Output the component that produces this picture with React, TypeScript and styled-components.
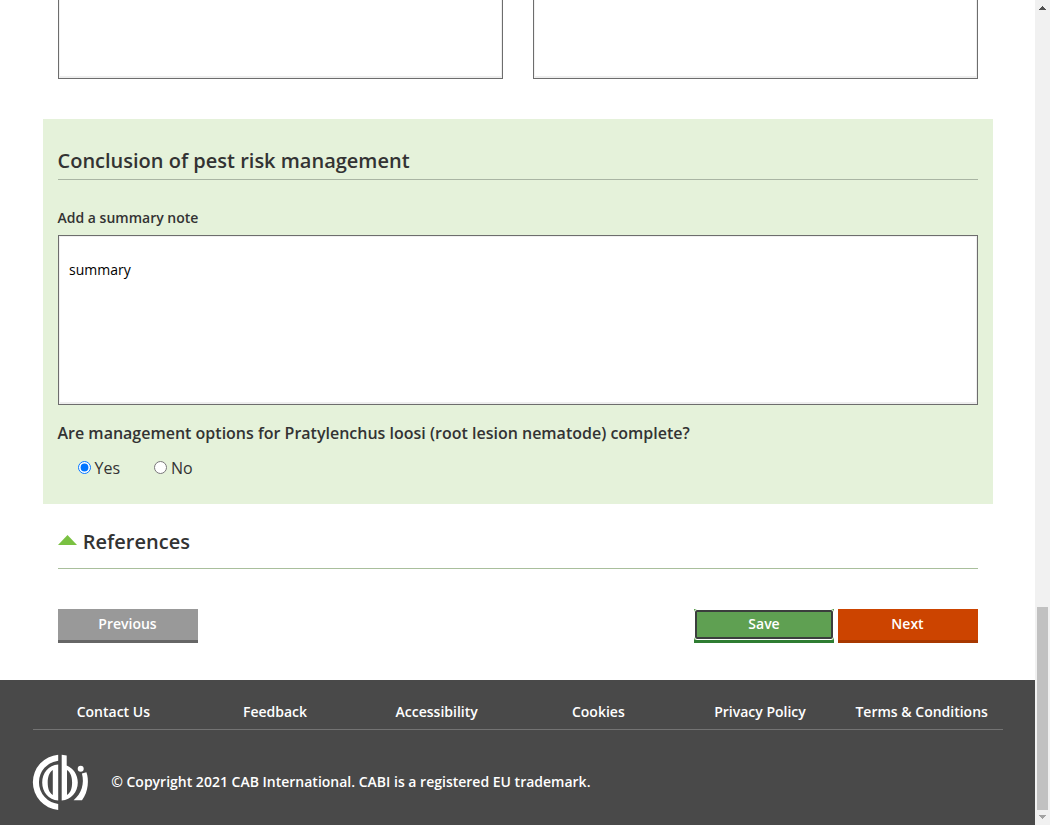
import React from "react";
import styled, { createGlobalStyle } from "styled-components";

const GlobalStyle = createGlobalStyle`
  * { box-sizing: border-box; }
  body { margin: 0; background: #fff; overflow: hidden; font-family: "Open Sans", sans-serif; color: #333; }
`;

const Viewport = styled.div`
  display: flex;
  width: 1050px;
  height: 825px;
`;

const Page = styled.div`
  width: 1035px;
  display: flex;
  flex-direction: column;
`;

const Main = styled.main`
  height: 680px;
  padding: 0 42.5px;
`;

const NotesRow = styled.div`
  display: flex;
  gap: 30px;
  height: 79px;
  margin-bottom: 40px;
  padding: 0 15px;
  align-items: flex-end;
`;

const NoteField = styled.textarea<{ $height: number }>`
  display: block;
  flex: 1;
  width: 100%;
  min-width: 0;
  height: ${(p) => p.$height}px;
  flex-shrink: 0;
  margin: 0;
  padding: 24px 10px 10px 10.5px;
  border: 1px solid #6d6d6d;
  border-radius: 0;
  background: #fff;
  box-shadow: inset 1px 1px 0 #f1f1f1, inset -1px -2px 0 #eee;
  color: #000;
  font: 14px/20px "Open Sans", sans-serif;
  resize: none;
  outline: none;
  overflow: hidden;
`;

const Conclusion = styled.section`
  height: 385px;
  padding: 26px 15px 0;
  background: #e5f2da;
`;

const Heading = styled.h2`
  margin: 0;
  height: 35px;
  border-bottom: 1px solid #a9b5a3;
  font-size: 20px;
  line-height: 32px;
  font-weight: 600;
`;

const FieldLabel = styled.label`
  display: block;
  margin: 28px 0 7px;
  font-size: 14px;
  line-height: 20px;
  font-weight: 600;
`;

const Question = styled.p`
  margin: 16px 0 0;
  font-size: 16px;
  line-height: 24px;
  font-weight: 600;
`;

const Options = styled.div`
  display: flex;
  gap: 34px;
  margin-top: 11px;
  padding-left: 20px;
`;

const Option = styled.label`
  display: flex;
  align-items: center;
  gap: 4px;
  font-size: 16px;
  line-height: 24px;
  input { width: 13px; height: 13px; margin: 0 0 1px; }
`;

const References = styled.section`
  display: flex;
  height: 65px;
  margin: 0 15px;
  padding-top: 22px;
  border-bottom: 1px solid #a9b5a3;
  border-bottom-color: #a9bf9c;
`;

const Arrow = styled.svg`
  width: 19px;
  height: 10px;
  margin: 9px 6.3px 0 0;
`;

const ReferencesTitle = styled.h2`
  margin: 0;
  font-size: 20px;
  line-height: 32px;
  font-weight: 600;
`;

const Actions = styled.div`
  display: flex;
  gap: 4px;
  margin: 40px 15px 0;
`;

const tones = {
  grey: ["#999", "#666"],
  green: ["#5fa052", "#2f7d32"],
  orange: ["#cc4400", "#a83800"],
};

const Button = styled.button<{ $tone: keyof typeof tones }>`
  width: 140px;
  height: 34px;
  padding: 0 0 1px;
  border: 0;
  border-bottom: 3px solid ${(p) => tones[p.$tone][1]};
  background: ${(p) => tones[p.$tone][0]};
  color: #fff;
  font: 600 14px/20px "Open Sans", sans-serif;
  &:first-child { margin-right: auto; }
`;

const SaveButton = styled(Button)`
  padding: 0;
`;

const FocusFrame = styled.span`
  display: flex;
  align-items: center;
  justify-content: center;
  height: 31px;
  padding: 0 0 1px 1px;
  border: 1px solid #fff;
  border-radius: 3px;
  background: #5fa052;
  box-shadow: inset 0 0 0 2px #3b3e3d;
`;

const Footer = styled.footer`
  height: 145px;
  padding: 0 32.5px;
  background: #494949;
  color: #fff;
  font-size: 14px;
  font-weight: 600;
`;

const FooterNav = styled.nav`
  display: grid;
  grid-template-columns: repeat(6, 1fr);
  height: 50px;
  padding-top: 22px;
  border-bottom: 1px solid #737373;
  margin: 0;
  text-align: center;
`;

const FooterLink = styled.a`
  color: #fff;
  line-height: 20px;
  white-space: nowrap;
`;

const Copyright = styled.div`
  display: flex;
  align-items: center;
  gap: 22.7px;
  margin-top: 24px;
  line-height: 20px;
`;

const Scrollbar = styled.div`
  width: 15px;
  height: 825px;
  display: flex;
  flex-direction: column;
  align-items: center;
  background: #f1f1f1;
`;

const ScrollArrow = styled.svg`
  width: 15px;
  height: 15px;
`;

const ScrollThumb = styled.div`
  width: 11px;
  height: 203px;
  margin-top: 592px;
  background: #c1c1c1;
`;

const links = ["Contact Us", "Feedback", "Accessibility", "Cookies", "Privacy Policy", "Terms & Conditions"];

function Logo() {
  return (
    <svg width="56" height="56" viewBox="1 -0.7 56 56" fill="#fff" fillRule="evenodd" overflow="visible">
      <path d="M26.2 0A27.7 27.7 0 0 0 26.2 55.2V49.3A21.8 21.8 0 0 1 26.2 6Z" />
      <path d="M26.2 9.8C16.5 10.5 10.2 18.4 10.2 27.8S16.5 45.1 26.2 45.8ZM20.8 15.2V40.4C17 37.8 15.7 33.3 15.7 27.8S17 17.8 20.8 15.2Z" />
      <path d="M29.7 0L34.7 0.7V10.7C41.3 13.3 45.8 20 45.8 27.8C45.8 37.5 39.2 45.1 29.7 45.8ZM35 15.2V40.4C38.8 37.8 40.1 33.3 40.1 27.8S38.8 17.8 35 15.2Z" />
      <circle cx="48.7" cy="14" r="3" />
      <path d="M49.9 18.9L54.4 17.5C57 24.5 56.7 36.6 50 45.6H41.6C49.5 39.2 52.7 28.7 49.9 18.9Z" />
    </svg>
  );
}

export default function App() {
  return (
    <Viewport>
      <GlobalStyle />
      <Page>
        <Main>
          <NotesRow>
            <NoteField $height={170} aria-label="Note one" />
            <NoteField $height={170} aria-label="Note two" />
          </NotesRow>
          <Conclusion>
            <Heading>Conclusion of pest risk management</Heading>
            <FieldLabel htmlFor="summary">Add a summary note</FieldLabel>
            <NoteField id="summary" $height={170} defaultValue="summary" />
            <Question>Are management options for Pratylenchus loosi (root lesion nematode) complete?</Question>
            <Options>
              <Option><input type="radio" name="complete" defaultChecked />Yes</Option>
              <Option><input type="radio" name="complete" />No</Option>
            </Options>
          </Conclusion>
          <References>
            <Arrow viewBox="0 0 19 10"><path d="M0 10L9.5 0L19 10Z" fill="#7ac142" /></Arrow>
            <ReferencesTitle>References</ReferencesTitle>
          </References>
          <Actions>
            <Button $tone="grey">Previous</Button>
            <SaveButton $tone="green"><FocusFrame>Save</FocusFrame></SaveButton>
            <Button $tone="orange">Next</Button>
          </Actions>
        </Main>
        <Footer>
          <FooterNav>{links.map((l) => <FooterLink key={l}>{l}</FooterLink>)}</FooterNav>
          <Copyright>
            <Logo />
            <span>© Copyright 2021 CAB International. CABI is a registered EU trademark.</span>
          </Copyright>
        </Footer>
      </Page>
      <Scrollbar>
        <ScrollArrow viewBox="0 0 15 15" shapeRendering="crispEdges"><path d="M4 10L7.5 6L11 10Z" fill="#505050" /></ScrollArrow>
        <ScrollThumb />
        <ScrollArrow viewBox="0 0 15 15" shapeRendering="crispEdges"><path d="M4 5L7.5 9L11 5Z" fill="#a3a3a3" /></ScrollArrow>
      </Scrollbar>
    </Viewport>
  );
}
